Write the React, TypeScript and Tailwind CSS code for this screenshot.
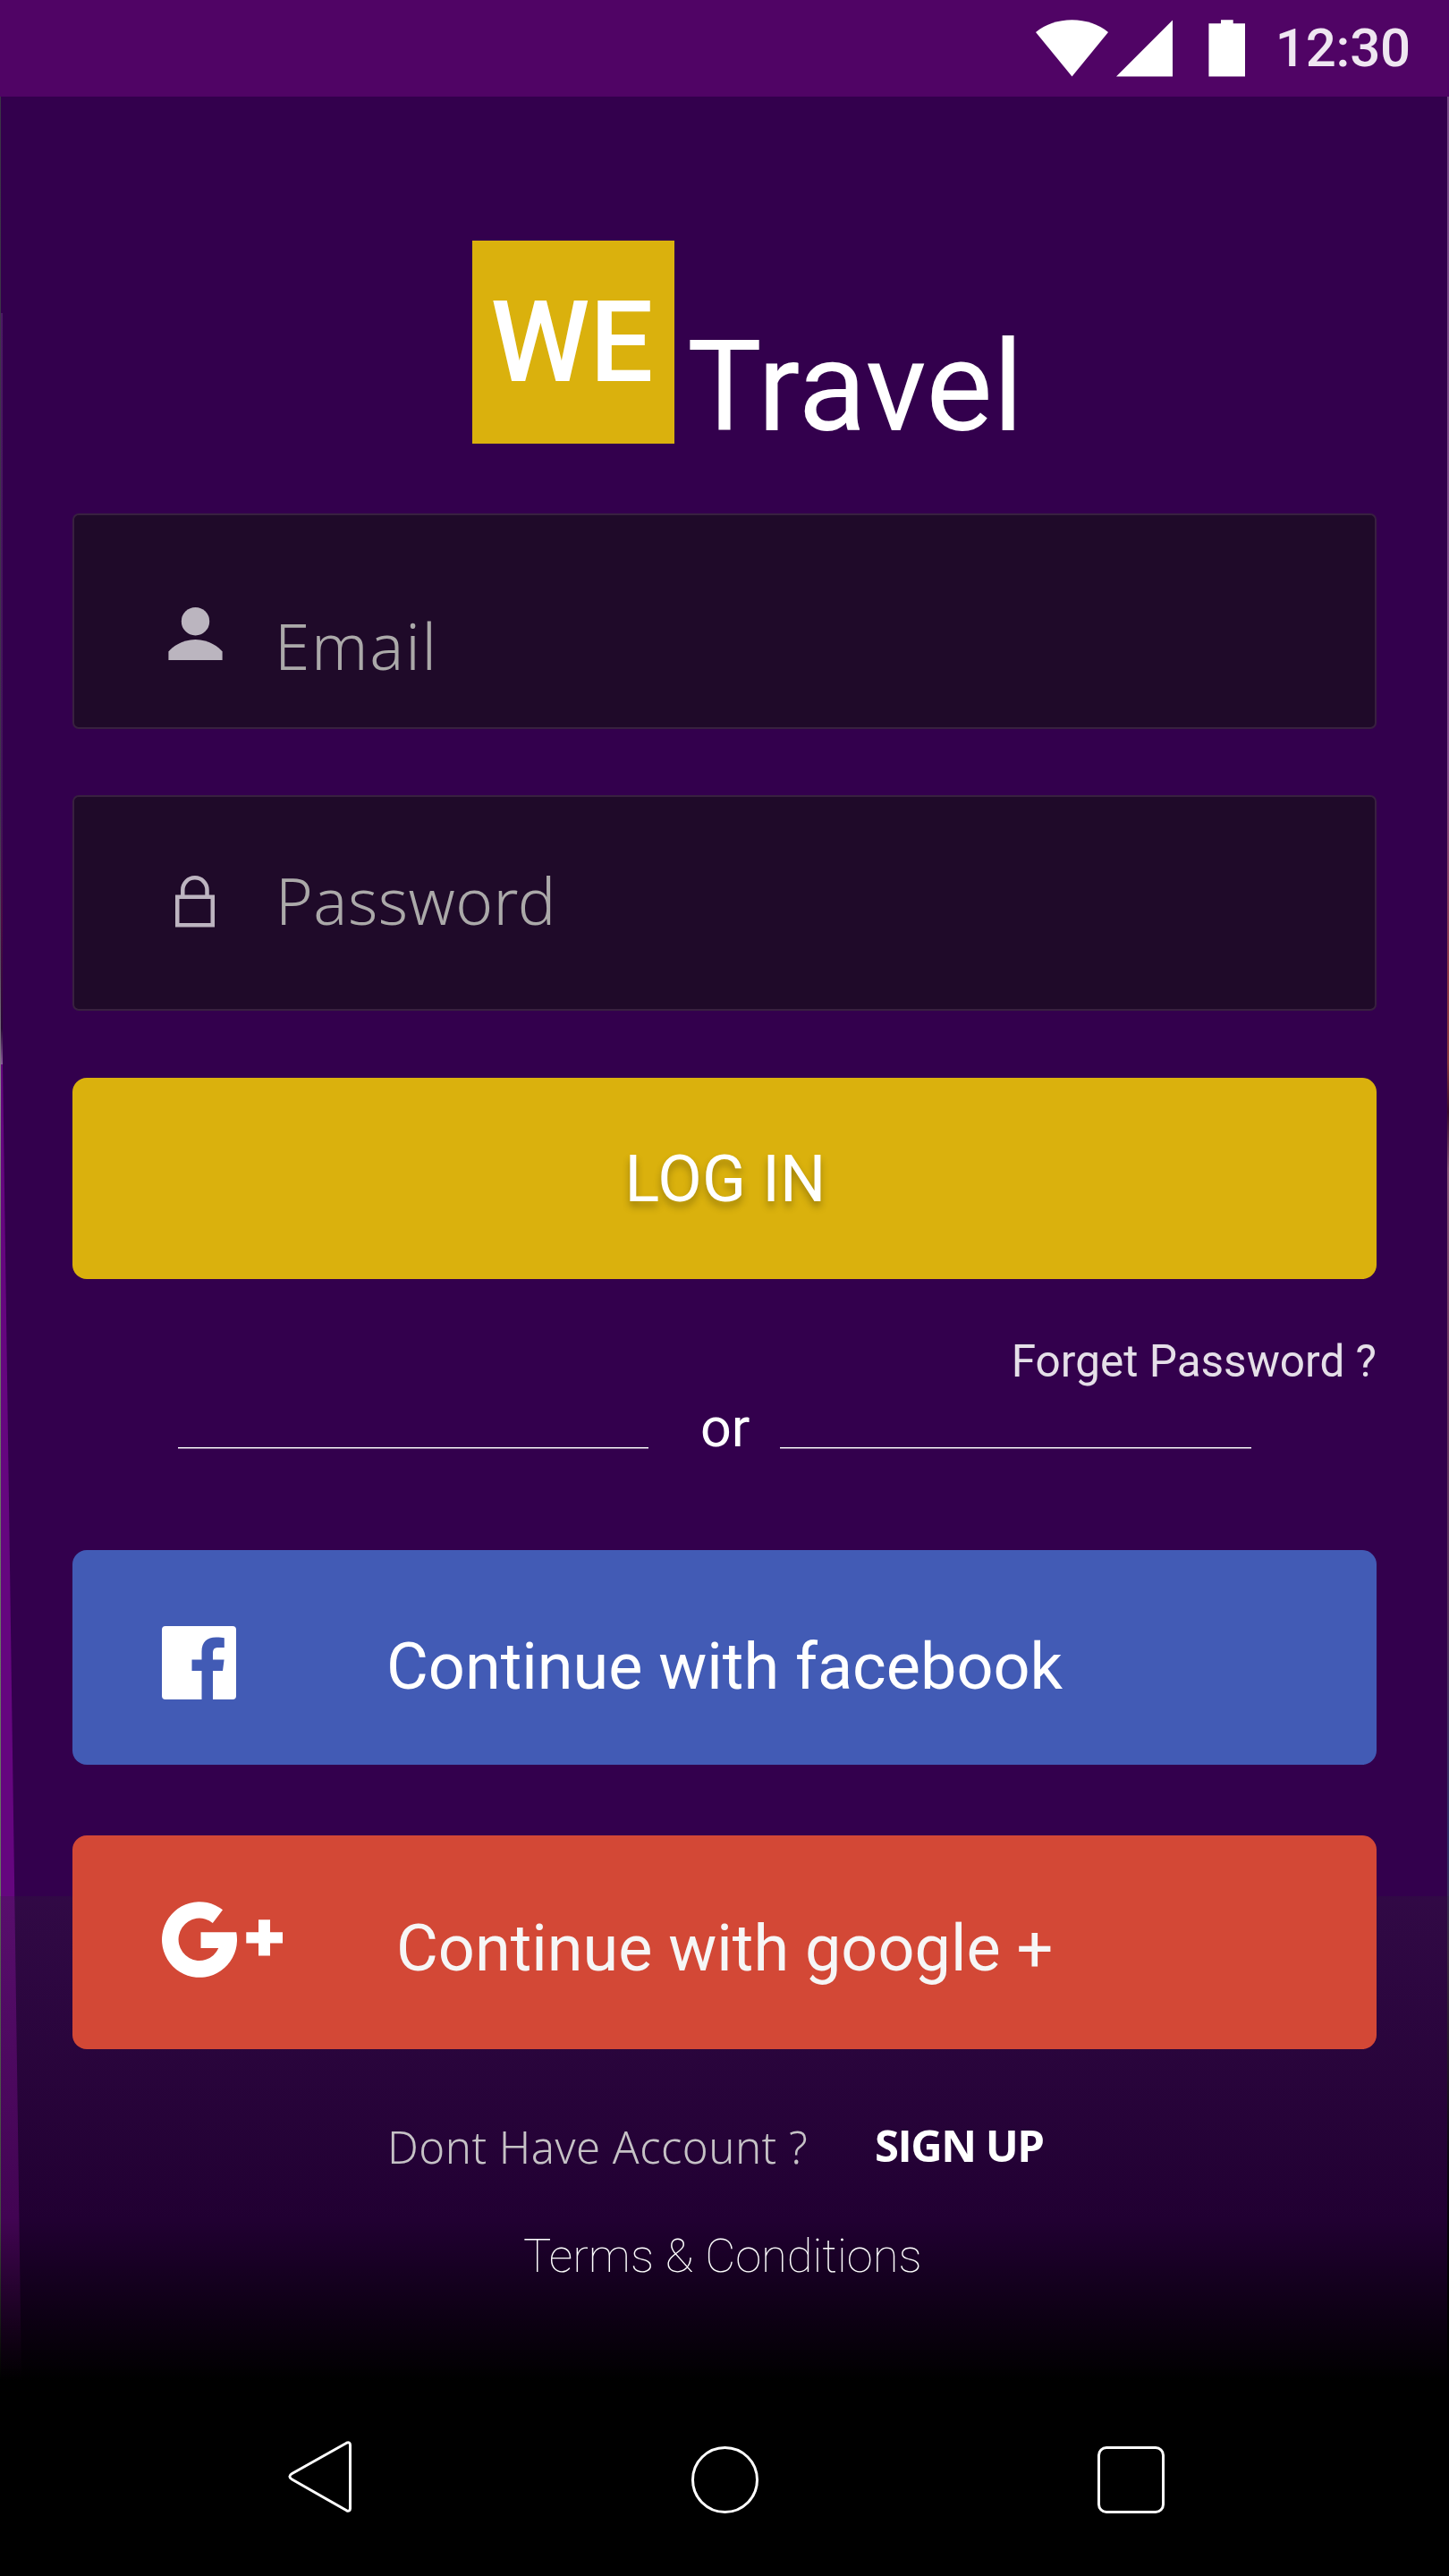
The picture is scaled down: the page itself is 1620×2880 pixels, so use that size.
import type { ReactNode } from 'react'

function StatusBar() {
  return (
    <header className="flex h-[108px] items-center justify-end bg-[#500465] pr-[43px] text-white">
      <svg className="mr-[9px] h-16 w-[81px] shrink-0" viewBox="0 0 81 64" fill="currentColor">
        <path d="M40.5 63.5 0 14C11 5 25 .3 40.5 .3S70 5 81 14Z" />
      </svg>
      <svg className="mr-10 h-16 w-[63px] shrink-0" viewBox="0 0 63 64" fill="currentColor">
        <path d="M0 63.6 63 .5V63.6Z" />
      </svg>
      <svg className="mr-[34px] h-16 w-[41px] shrink-0" viewBox="0 0 41 64" fill="currentColor">
        <path d="M.4 4.2H14V.2H27.7V4.2H41V63.6H.4Z" />
      </svg>
      <span className="text-[60px] leading-[70px] font-medium tracking-[-0.2px] text-[#efe6f1]">12:30</span>
    </header>
  )
}

function PersonIcon() {
  return (
    <svg className="h-[59px] w-[61px]" viewBox="0 0 61 59" fill="#bbb5bf">
      <circle cx="30.5" cy="15.7" r="15.7" />
      <path d="M.4 59V49.6C4.5 44.5 15 36 30.5 36S56.5 44.5 60.6 49.6V59Z" />
    </svg>
  )
}

function LockIcon() {
  return (
    <svg className="mr-px h-[58px] w-[44px]" viewBox="0 0 44 58" fill="none" stroke="#bdb4c0" strokeWidth="4.5">
      <path d="M8.3 23.5V15.9a13.6 13.6 0 0 1 27.2 0V23.5" />
      <path d="M2.25 23.7H41.75V55.2H2.25Z" />
    </svg>
  )
}

function FacebookIcon() {
  return (
    <svg className="h-[82px] w-[83px] shrink-0" viewBox="0 0 83 82" fill="white">
      <path d="M4 0H79a4 4 0 0 1 4 4V78a4 4 0 0 1-4 4H57V50H68L69.6 37.5H57V30.5C57 26 58.5 24 63 24H69.8V13.2C68 12.9 64.5 12.6 60.5 12.6 50.5 12.6 44.5 18.2 44.5 28.5V37.5H33.5V50H44.5V82H4a4 4 0 0 1-4-4V4a4 4 0 0 1 4-4Z" />
    </svg>
  )
}

function GooglePlusIcon() {
  return (
    <svg className="h-[85px] w-[135px] shrink-0" viewBox="0 0 135 85" fill="white">
      <path d="M68 9.3 56.8 24A23.4 23.7 0 1 0 63.3 52H43.5V34.2H83.2A42 42.3 0 1 1 68 9.3Z" />
      <path d="M108 20.2H121V34.2H135V46.5H121V60.5H108V46.5H94.3V34.2H108Z" />
    </svg>
  )
}

function Field({ icon, label, className }: { icon: ReactNode; label: ReactNode; className: string }) {
  return (
    <div className={`flex h-[241px] items-start rounded-[7px] border-2 border-[#38213f] bg-[#1f0a29] pl-[105px] ${className}`}>
      <div className="flex w-[61px] shrink-0 justify-center">{icon}</div>
      {label}
    </div>
  )
}

function NavBar() {
  return (
    <footer className="flex h-[219px] items-start bg-black pl-[322px]">
      <svg className="mt-[67px] h-[82px] w-[72px] shrink-0" viewBox="0 0 72 82" fill="none" stroke="white" strokeWidth="3">
        <path d="M4.5 37.5 65.5 3.200C67.8 2 69.5 3 69.5 5.5V76.5C69.5 79 67.8 80 65.5 78.800L4.5 44C1 42 1 39.5 4.5 37.5Z" />
      </svg>
      <div className="mt-[74px] ml-[379px] size-[75px] shrink-0 rounded-full border-[3px] border-white" />
      <div className="mt-[74px] ml-[379px] size-[75px] shrink-0 rounded-[10px] border-[3px] border-white" />
    </footer>
  )
}

/* Purple sheet with a lighter slanted fold, slim photo edges and a fade to black. */
function Backdrop() {
  return (
    <div className="absolute inset-0 -z-10 bg-[#33004d]">
      <div className="absolute inset-0 bg-[#65067f] [clip-path:polygon(0_1190px,3px_1190px,16.3px_2120px,24px_2661px,0_2661px)]" />
      <div className="absolute inset-y-0 left-0 w-px bg-[linear-gradient(180deg,#3a3445_0px,#40344c_900px,#5a4f60_1080px,#8a8590_1220px,#6b7468_1400px,#667063_2120px)]" />
      <div className="absolute top-[350px] left-px h-[840px] w-[2px] bg-[linear-gradient(180deg,#4b1a63_0px,#421459_560px,#4c0a45_680px,#2a0838_800px,#8a5a9a_840px)]" />
      <div className="absolute top-[108px] right-0 bottom-0 w-[2px] bg-[linear-gradient(180deg,#774a87_0px,#85508d_750px,#8f3a45_980px,#8a3a3c_1080px,#3a0a2a_1135px,#8a5878_1200px,#703a62_1400px,#54305c_1700px,#30306a_1950px,#48304f_2080px,#100818_2300px,#000_2500px)]" />
      <div className="absolute inset-x-0 top-[2120px] bottom-0 bg-[linear-gradient(180deg,rgba(42,42,42,0.22)_0px,rgba(0,0,0,0.35)_360px,#000_541px)]" />
    </div>
  )
}

export default function App() {
  return (
    <div className="relative isolate flex h-[2880px] w-[1620px] flex-col overflow-hidden font-['Roboto',sans-serif] text-white">
      <Backdrop />
      <StatusBar />
      <main className="flex grow flex-col px-[81px]">
        <div className="mt-[161px] ml-[447px] flex h-[227px] items-start">
          <div className="flex h-[227px] w-[226px] shrink-0 items-center justify-center bg-[#dab10d] pr-[3px]">
            <span className="text-[126px] leading-[140px] font-medium">WE</span>
          </div>
          <span className="mt-[94px] ml-[14px] text-[140.5px] leading-[140px] tracking-[0.3px]">Travel</span>
        </div>

        <Field
          className="mt-[78px]"
          icon={<div className="pt-[103px]"><PersonIcon /></div>}
          label={<span className="mt-[106px] ml-[58px] font-['Noto_Sans',sans-serif] text-[71px] leading-[80px] font-light tracking-[1.8px] text-[#aba9a9]">Email</span>}
        />
        <Field
          className="mt-[74px]"
          icon={<div className="pt-[88px]"><LockIcon /></div>}
          label={<span className="mt-[76px] ml-[59px] font-['Noto_Sans',sans-serif] text-[71px] leading-[80px] font-light tracking-[0.5px] text-[#aba9a9]">Password</span>}
        />

        <button className="mt-[75px] h-[225px] rounded-2xl bg-[#dab10d] pt-0.5 pl-0.5 text-[72px] leading-[80px] tracking-[0.2px] [text-shadow:0_6px_8px_rgba(0,0,0,0.28)]">
          LOG IN
        </button>

        <a className="mt-[62px] self-end text-[49.5px] leading-[60px] text-[#e5dfe8]">Forget Password ?</a>

        <div className="mt-[5px] flex h-20 items-start pl-[118px]">
          <div className="mt-[61px] h-px w-[526px] shrink-0 bg-white shadow-[0_1px_0_rgba(255,255,255,0.45)]" />
          <span className="-mt-px ml-[58px] w-[56px] shrink-0 text-[61px] leading-[80px]">or</span>
          <div className="mt-[61px] ml-[33px] h-px w-[527px] shrink-0 bg-white shadow-[0_1px_0_rgba(255,255,255,0.45)]" />
        </div>

        <button className="mt-[96px] flex h-[240px] items-start rounded-2xl bg-[#425bb5] pl-[100px] text-left">
          <div className="pt-[85px]"><FacebookIcon /></div>
          <span className="mt-[86px] ml-[168px] text-[72px] leading-[90px]">Continue with facebook</span>
        </button>

        <button className="mt-[79px] flex h-[239px] items-start rounded-2xl bg-[#d34836] pl-[100px] text-left">
          <div className="pt-[74px]"><GooglePlusIcon /></div>
          <span className="mt-[82px] ml-[127px] text-[72px] leading-[90px] text-[#f6f6f6]">Continue with google +</span>
        </button>

        <div className="mt-[74px] ml-[352px] flex h-[70px] items-start">
          <span className="w-[545px] shrink-0 font-['Noto_Sans',sans-serif] text-[49px] leading-[70px] font-light tracking-[0.5px] text-[#c6c2c6]">
            Dont Have Account ?
          </span>
          <a className="-mt-[2px] font-['Open_Sans',sans-serif] text-[49px] leading-[70px] font-bold tracking-[-1.5px]">SIGN UP</a>
        </div>
        <a className="mt-[57px] ml-[504px] text-[52.5px] leading-[60px] font-thin">Terms &amp; Conditions</a>
      </main>
      <NavBar />
    </div>
  )
}
